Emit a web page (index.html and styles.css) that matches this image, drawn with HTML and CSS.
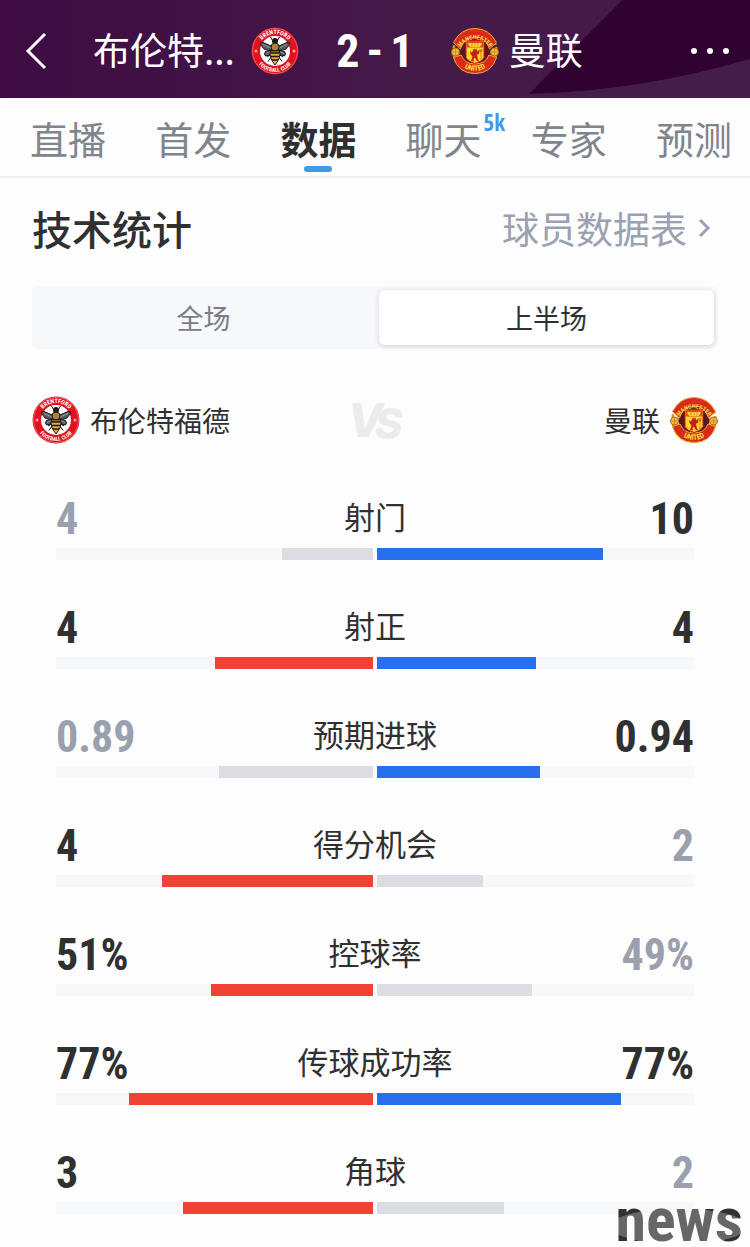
FILE: index.html
```html
<!DOCTYPE html>
<html lang="zh-CN">
<head>
  <meta charset="UTF-8">
  <meta name="viewport" content="width=device-width, initial-scale=1.0">
  <title>布伦特福德 2-1 曼联</title>
  <link rel="stylesheet" href="styles.css">
</head>
<body>
  <div class="page">
    <header class="header">
      <svg class="header-art" viewBox="0 0 750 98" preserveAspectRatio="none" aria-hidden="true">
        <path d="M622 0L529 94Q642 91 750 59V0z" fill="#30022f"/>
        <path d="M529 94Q642 91 750 59V98H525z" fill="#451d4a"/>
      </svg>
      <button class="icon-btn back" aria-label="返回">
        <svg width="24" height="38" viewBox="0 0 24 38"><path d="M21 2L4 19l17 17" fill="none" stroke="#fff" stroke-width="3"/></svg>
      </button>
      <span class="header-team home">布伦特...</span>
      <svg class="crest" viewBox="0 0 96 96">
        <g id="brentford">
          <path id="bre-top" d="M14 48a34 34 0 0 1 68 0" fill="none"/>
          <path id="bre-bottom" d="M6 48a42 42 0 0 0 84 0" fill="none"/>
          <circle cx="48" cy="48" r="47" fill="#e1121f"/>
          <circle cx="48" cy="48" r="45" fill="none" stroke="#f4a3a6" stroke-width="1"/>
          <circle cx="48" cy="48" r="30" fill="#fff"/>
          <text class="crest-text" fill="#fff" text-anchor="middle"><textPath href="#bre-top" startOffset="50%">BRENTFORD</textPath></text>
          <text class="crest-text crest-text-sm" fill="#fff" text-anchor="middle"><textPath href="#bre-bottom" startOffset="50%">FOOTBALL CLUB</textPath></text>
          <circle cx="10" cy="48" r="3" fill="#f4a3a6"/>
          <circle cx="86" cy="48" r="3" fill="#f4a3a6"/>
          <g fill="#595b5c" stroke="#171717" stroke-width="2">
            <path d="M45 40L24 31q-6-1-5 4l7 9q8 5 18 1z"/>
            <path d="M51 40l21-9q6-1 5 4l-7 9q-8 5-18 1z"/>
            <path d="M44 46l-15 3q-4 5 0 9 8 1 15-9zM52 46l15 3q4 5 0 9-8 1-15-9z"/>
          </g>
          <path d="M24 35l18 8M72 35l-18 8M30 53l11-5M66 53l-11-5" stroke="#d8d8d8" stroke-width="1"/>
          <path d="M43 27l-4-7M53 27l4-7M40 60l-6 9M56 60l6 9M40 55l-8 5M56 55l8 5" stroke="#171717" stroke-width="2" fill="none"/>
          <circle cx="48" cy="28" r="6" fill="#171717"/>
          <ellipse cx="48" cy="40" rx="8" ry="8" fill="#ad8232" stroke="#171717" stroke-width="2"/>
          <path d="M39 48h18q4 12-9 28-13-16-9-28z" fill="#e8ae3c" stroke="#171717" stroke-width="2"/>
          <path d="M39 52h18M39 59h18M42 66h12" stroke="#171717" stroke-width="3"/>
        </g>
      </svg>
      <div class="score"><span>2</span><span>-</span><span>1</span></div>
      <svg class="crest" viewBox="0 0 96 96">
        <g id="manutd">
          <path id="mu-top" d="M17 45a33 31 0 0 1 62 0" fill="none"/>
          <path id="mu-bottom" d="M9 50a39 38 0 0 0 78 0" fill="none"/>
          <circle cx="48" cy="48" r="43" fill="none" stroke="#d8932a" stroke-width="5" stroke-dasharray="6 4"/>
          <circle cx="48" cy="48" r="31" fill="#5a1722"/>
          <path d="M5 31Q20 3 48 3t43 28L77 44Q70 20 48 20T19 44z" fill="#d92a1c" stroke="#f0aa2d" stroke-width="2"/>
          <path d="M5 61l15-5q7 18 28 18t28-18l15 5Q81 93 48 93T5 61z" fill="#d92a1c" stroke="#f0aa2d" stroke-width="2"/>
          <circle cx="9" cy="50" r="8" fill="#f5bd39" stroke="#a96a18" stroke-width="2"/>
          <circle cx="87" cy="50" r="8" fill="#f5bd39" stroke="#a96a18" stroke-width="2"/>
          <path d="M9 43v14M3 50h12M87 43v14M81 50h12" stroke="#a96a18" stroke-width="1"/>
          <path d="M30 27h36v34q-3 8-18 12-15-4-18-12z" fill="#fbd72b" stroke="#c91c19" stroke-width="2"/>
          <path d="M31 28h34v13H31z" fill="#e64722"/>
          <path d="M35 32h26v4l-4 4H39l-4-4z" fill="#ffd43c"/>
          <path d="M42 30v9M48 29v10M54 30v9" stroke="#c94a1c" stroke-width="1"/>
          <path d="M46 43l2 2 3-2 1 6 5-4-1 9-4 1 1 6 3 8-5-2-3-6-3 3 1 5-6-1 3-9-4-5-1-6 4 3z" fill="#c81d18"/>
          <path d="M60 44v22M58 44v5h4v-5" stroke="#c81d18" stroke-width="1" fill="none"/>
          <text class="crest-text" fill="#ffdb37" text-anchor="middle"><textPath href="#mu-top" startOffset="50%">MANCHESTER</textPath></text>
          <text class="crest-text crest-text-lg" fill="#ffdb37" text-anchor="middle"><textPath href="#mu-bottom" startOffset="50%">UNITED</textPath></text>
        </g>
      </svg>
      <span class="header-team away">曼联</span>
      <button class="icon-btn more" aria-label="更多">
        <svg width="40" height="8" viewBox="0 0 40 8" fill="#fff"><circle cx="4" cy="4" r="3"/><circle cx="20" cy="4" r="3"/><circle cx="36" cy="4" r="3"/></svg>
      </button>
    </header>

    <nav class="tabs">
      <a href="#" class="tab">直播</a>
      <a href="#" class="tab">首发</a>
      <a href="#" class="tab active">数据</a>
      <a href="#" class="tab">聊天<span class="tab-badge">5k</span></a>
      <a href="#" class="tab">专家</a>
      <a href="#" class="tab">预测</a>
    </nav>

    <main class="content">
      <div class="section-head">
        <h1>技术统计</h1>
        <a href="#" class="more-link">球员数据表
          <svg width="14" height="22" viewBox="0 0 14 22"><path d="M3 3l8 8-8 8" fill="none" stroke="#9aa1b0" stroke-width="3"/></svg>
        </a>
      </div>

      <div class="segment">
        <button class="segment-btn">全场</button>
        <button class="segment-btn active">上半场</button>
      </div>

      <div class="teams">
        <div class="team">
          <svg class="crest" viewBox="0 0 96 96"><use href="#brentford"/></svg>
          <span>布伦特福德</span>
        </div>
        <div class="vs"><span>V</span><span class="vs-s">S</span></div>
        <div class="team team-away">
          <span>曼联</span>
          <svg class="crest" viewBox="0 0 96 96"><use href="#manutd"/></svg>
        </div>
      </div>

      <ul class="stats">
        <li class="stat">
          <div class="stat-row"><span class="value low">4</span><span class="label">射门</span><span class="value">10</span></div>
          <div class="bars">
            <div class="bar"><div class="fill low" style="width: 28.6%"></div></div>
            <div class="bar"><div class="fill blue" style="width: 71.4%"></div></div>
          </div>
        </li>
        <li class="stat">
          <div class="stat-row"><span class="value">4</span><span class="label">射正</span><span class="value">4</span></div>
          <div class="bars">
            <div class="bar"><div class="fill red" style="width: 50%"></div></div>
            <div class="bar"><div class="fill blue" style="width: 50%"></div></div>
          </div>
        </li>
        <li class="stat">
          <div class="stat-row"><span class="value low">0.89</span><span class="label">预期进球</span><span class="value">0.94</span></div>
          <div class="bars">
            <div class="bar"><div class="fill low" style="width: 48.6%"></div></div>
            <div class="bar"><div class="fill blue" style="width: 51.4%"></div></div>
          </div>
        </li>
        <li class="stat">
          <div class="stat-row"><span class="value">4</span><span class="label">得分机会</span><span class="value low">2</span></div>
          <div class="bars">
            <div class="bar"><div class="fill red" style="width: 66.7%"></div></div>
            <div class="bar"><div class="fill low" style="width: 33.3%"></div></div>
          </div>
        </li>
        <li class="stat">
          <div class="stat-row"><span class="value">51%</span><span class="label">控球率</span><span class="value low">49%</span></div>
          <div class="bars">
            <div class="bar"><div class="fill red" style="width: 51%"></div></div>
            <div class="bar"><div class="fill low" style="width: 49%"></div></div>
          </div>
        </li>
        <li class="stat">
          <div class="stat-row"><span class="value">77%</span><span class="label">传球成功率</span><span class="value">77%</span></div>
          <div class="bars">
            <div class="bar"><div class="fill red" style="width: 77%"></div></div>
            <div class="bar"><div class="fill blue" style="width: 77%"></div></div>
          </div>
        </li>
        <li class="stat">
          <div class="stat-row"><span class="value">3</span><span class="label">角球</span><span class="value low">2</span></div>
          <div class="bars">
            <div class="bar"><div class="fill red" style="width: 60%"></div></div>
            <div class="bar"><div class="fill low" style="width: 40%"></div></div>
          </div>
        </li>
      </ul>
    </main>
    <div class="watermark">news</div>
  </div>
</body>
</html>
```
FILE: styles.css
```css
* {
  margin: 0;
  padding: 0;
  box-sizing: border-box;
}
body {
  background: #fdfdfd;
  color: #303030;
  font-family: "Noto Sans CJK SC", "Noto Sans", sans-serif;
}
a {
  color: inherit;
  text-decoration: none;
}
button {
  border: none;
  background: none;
  font-family: inherit;
  cursor: pointer;
}
.page {
  position: relative;
}
.crest {
  width: 48px;
  height: 48px;
  flex-shrink: 0;
}
.crest-text {
  font: bold 12px "Roboto Condensed", "Roboto", sans-serif;
}
.crest-text-sm {
  font-size: 11px;
}
.crest-text-lg {
  font-size: 15px;
}

/* Header */
.header {
  position: relative;
  display: flex;
  align-items: center;
  height: 98px;
  padding: 4px 20px 0 24px;
  background: linear-gradient(90deg, #3e0c43, #451a48 60%);
  color: #fff;
}
.header > * {
  position: relative;
}
.header .header-art {
  position: absolute;
  inset: 0;
  width: 100%;
  height: 100%;
}
.icon-btn {
  display: flex;
  align-items: center;
}
.header-team {
  margin-bottom: 4px;
  font-size: 37px;
  line-height: 48px;
  white-space: nowrap;
}
.header-team.home {
  margin-left: 45px;
  margin-right: 16px;
}
.header-team.away {
  margin-left: 10px;
}
.score {
  flex: 0 0 152px;
  display: flex;
  justify-content: center;
  gap: 7px;
  font: bold 46px/48px "Roboto Condensed", "Roboto", sans-serif;
}
.more {
  margin-left: auto;
}

/* Tabs */
.tabs {
  display: flex;
  justify-content: space-between;
  height: 80px;
  padding: 0 18px 0 30px;
  border-bottom: 2px solid #f1f1f2;
}
.tab {
  position: relative;
  font-size: 38px;
  line-height: 80px;
  color: #80858c;
}
.tab.active {
  color: #2f2f2f;
  font-weight: 700;
}
.tab.active::after {
  content: '';
  position: absolute;
  left: 50%;
  bottom: 4px;
  width: 28px;
  height: 6px;
  margin-left: -14px;
  border-radius: 3px;
  background: #3f9ae6;
}
.tab-badge {
  position: absolute;
  left: 100%;
  top: 12px;
  margin-left: 2px;
  font: bold 23px/24px "Open Sans Condensed", "Roboto", sans-serif;
  color: #3f9ae6;
}

/* Content */
.content {
  padding: 20px 32px 33px;
}
.section-head {
  display: flex;
  justify-content: space-between;
  align-items: center;
  height: 60px;
}
.section-head h1 {
  font-size: 40px;
  font-weight: 500;
  line-height: 60px;
}
.more-link {
  display: flex;
  align-items: center;
  gap: 10px;
  padding-right: 7px;
  font-size: 37px;
  line-height: 60px;
  color: #9aa1b0;
}
.segment {
  display: flex;
  gap: 8px;
  margin-top: 28px;
  height: 63px;
  padding: 4px;
  border-radius: 6px;
  background: #f7f8fa;
}
.segment-btn {
  flex: 1;
  border-radius: 6px;
  font-size: 27px;
  color: #787d88;
}
.segment-btn.active {
  background: #fff;
  color: #303030;
  box-shadow: 0 1px 5px rgba(40, 50, 70, 0.2);
}
.teams {
  display: grid;
  grid-template-columns: 1fr auto 1fr;
  align-items: center;
  margin-top: 43px;
  height: 56px;
}
.team {
  display: flex;
  align-items: center;
  gap: 10px;
  font-size: 28px;
}
.team-away {
  justify-content: flex-end;
}
.vs {
  display: flex;
  margin-top: 4px;
  font: italic 800 46px/48px "Inter", sans-serif;
  color: #ebebec;
}
.vs-s {
  margin: 4px 0 0 -8px;
  font-size: 42px;
}
.stats {
  list-style: none;
  display: flex;
  flex-direction: column;
  gap: 43px;
  margin-top: 46px;
  padding: 0 24px;
}
.stat-row {
  display: grid;
  grid-template-columns: 1fr auto 1fr;
  height: 48px;
}
.value {
  font: bold 44px/50px "Roboto Condensed", "Roboto", sans-serif;
}
.value:last-child {
  text-align: right;
}
.value.low {
  color: #9aa0ae;
}
.label {
  font-size: 31px;
  line-height: 44px;
}
.bars {
  display: grid;
  grid-template-columns: 1fr 1fr;
  gap: 4px;
  margin-top: 6px;
}
.bar {
  display: flex;
  height: 12px;
  background: #f7f8fa;
}
.bar:first-child {
  justify-content: flex-end;
}
.fill.red {
  background: #f04336;
}
.fill.blue {
  background: #276fec;
}
.fill.low {
  background: #dcdde2;
}

.watermark {
  position: absolute;
  right: 7px;
  bottom: -5px;
  font: bold 62px/64px "Roboto Condensed", "Roboto", sans-serif;
  color: transparent;
  background: radial-gradient(ellipse 54% 28% at 50% 60%, #666 98%, #303030 100%);
  background-clip: text;
  -webkit-background-clip: text;
}
```
